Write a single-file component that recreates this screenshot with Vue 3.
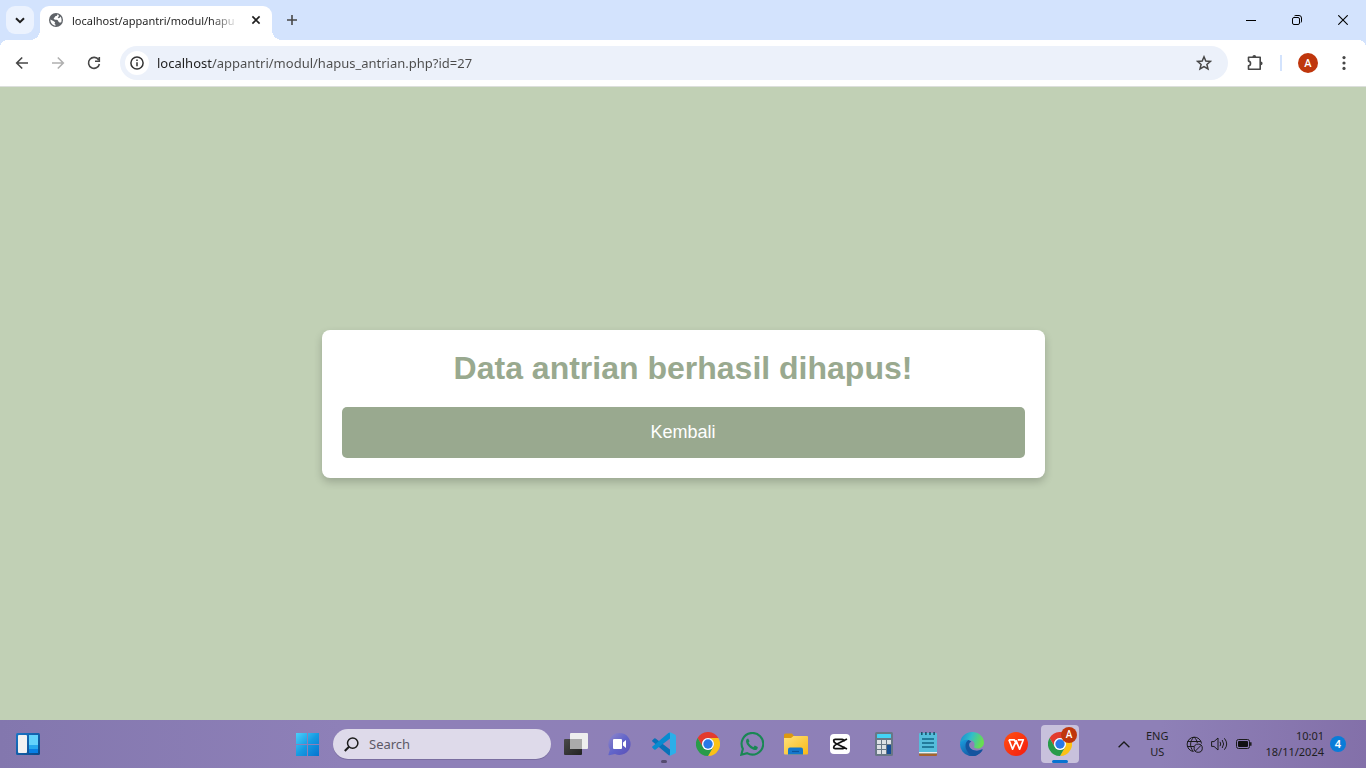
<script setup>
import { ref } from 'vue'

const address = ref('localhost/appantri/modul/hapus_antrian.php?id=27')
const query = ref('')
</script>

<template>
  <div class="screen">
    <header class="tabs">
      <button class="tab-search" aria-label="Search tabs">
        <svg width="10" height="7" viewBox="0 0 10 7"><path d="M1 1.2 5 5.2 9 1.2" fill="none" stroke="#1f1f1f" stroke-width="2" /></svg>
      </button>
      <div class="tab">
        <svg class="favicon" width="14" height="14" viewBox="0 0 14 14">
          <circle cx="7" cy="7" r="7" fill="#5f6368" />
          <path d="M8.2 1.3C8.8 2.6 7.6 3.3 6.2 3.3 6.2 4.7 4.8 4.6 4.7 5.6 4.7 6.5 6.4 6.9 7.6 6.8 9.2 6.8 9 8.4 10 9.2 11 9.8 11.8 9.2 12.3 9.2 12.9 7.5 12.7 5.2 11.4 3.6 11 4.8 10 5.5 8.7 5.1 9.7 4.2 9.8 2.8 9.8 2ZM1.4 6.6C1.3 9.8 3.6 12.4 6.5 12.7L6.5 11.4C5.6 11.2 5.2 10.4 6.2 9.7 5.8 8.4 3.2 7.8 1.4 6.6Z" fill="#fff" />
        </svg>
        <span class="tab-title">localhost/appantri/modul/hapu</span>
        <button class="tab-close" aria-label="Close tab">
          <svg width="10" height="10" viewBox="0 0 10 10"><path d="M1.4 1.4 8.6 8.6M8.6 1.4 1.4 8.6" stroke="#1f1f1f" stroke-width="1.6" /></svg>
        </button>
      </div>
      <button class="tab-new" aria-label="New tab">
        <svg width="12" height="12" viewBox="0 0 12 12"><path d="M6 1V11M1 6H11" stroke="#474747" stroke-width="1.6" /></svg>
      </button>
      <div class="window-buttons">
        <button aria-label="Minimize">
          <svg width="10" height="10" viewBox="0 0 10 10"><path d="M0 5.5H10" stroke="#000" /></svg>
        </button>
        <button aria-label="Restore">
          <svg width="10" height="10" viewBox="0 0 10 10" fill="none" stroke="#000"><rect x=".5" y="2.5" width="7" height="7" rx="1.5" /><path d="M2.5 .8Q3 .5 4 .5H7Q9.5 .5 9.5 3V6Q9.5 7 9.1 7.5" /></svg>
        </button>
        <button aria-label="Close">
          <svg width="10" height="10" viewBox="0 0 10 10"><path d="M.3 .3 9.7 9.7M9.7 .3 .3 9.7" stroke="#000" stroke-width="1.1" /></svg>
        </button>
      </div>
    </header>

    <nav class="toolbar">
      <button class="tool" aria-label="Back">
        <svg width="16" height="16" viewBox="0 0 16 16" fill="none" stroke="#474747" stroke-width="1.6"><path d="M14 8H3M8.2 2.5 2.7 8 8.2 13.5" /></svg>
      </button>
      <button class="tool" aria-label="Forward" disabled>
        <svg width="16" height="16" viewBox="0 0 16 16" fill="none" stroke="#b0b0b0" stroke-width="1.6"><path d="M2 8H13M7.8 2.5 13.3 8 7.8 13.5" /></svg>
      </button>
      <button class="tool" aria-label="Reload">
        <svg width="16" height="16" viewBox="0 0 16 16" fill="none" stroke="#474747" stroke-width="1.6"><path d="M12.6 4.8A5.5 5.5 0 1 0 13.4 9M13.3 2V6.3H9" /></svg>
      </button>
      <div class="omnibox">
        <button class="site-info" aria-label="View site information">
          <svg width="14" height="14" viewBox="0 0 14 14"><circle cx="7" cy="7" r="6.1" fill="none" stroke="#333" stroke-width="1.5" /><path d="M7 6.2V10.3M7 3.6V5.1" stroke="#333" stroke-width="1.5" /></svg>
        </button>
        <input v-model="address" class="address" type="text" aria-label="Address" spellcheck="false" />
        <button class="star" aria-label="Bookmark this tab">
          <svg width="16" height="16" viewBox="0 0 16 16"><path d="M8 1.8 9.8 6 14.4 6.4 10.9 9.4 12 13.9 8 11.5 4 13.9 5.1 9.4 1.6 6.4 6.2 6Z" fill="none" stroke="#474747" stroke-width="1.5" /></svg>
        </button>
      </div>
      <button class="extensions" aria-label="Extensions">
        <svg width="18" height="18" viewBox="0 0 18 18"><path d="M2.5 3.3H14.2V15.2H2.5V11.7C5.2 11.5 5.2 7.3 2.5 7.1Z" fill="none" stroke="#474747" stroke-width="1.6" stroke-linejoin="round" /><path d="M6.4 3A1.9 1.9 0 0 1 10.2 3ZM14.7 7.4A1.9 1.9 0 0 1 14.7 11.2Z" fill="#474747" /></svg>
      </button>
      <span class="separator"></span>
      <button class="avatar" aria-label="Profile">A</button>
      <button class="menu" aria-label="Menu">
        <svg width="4" height="16" viewBox="0 0 4 16" fill="#474747"><circle cx="2" cy="2.6" r="1.6" /><circle cx="2" cy="8" r="1.6" /><circle cx="2" cy="13.4" r="1.6" /></svg>
      </button>
    </nav>

    <main class="page">
      <section class="card">
        <h1>Data antrian berhasil dihapus!</h1>
        <button class="back">Kembali</button>
      </section>
    </main>

    <footer class="taskbar">
      <div class="side">
        <button class="widgets" aria-label="Widgets">
          <svg width="24" height="22" viewBox="0 0 24 22">
            <defs><linearGradient id="wg" x2="1" y2="1"><stop stop-color="#1976c8" /><stop offset="1" stop-color="#0c4888" /></linearGradient></defs>
            <rect width="24" height="22" rx="1.5" fill="url(#wg)" /><rect x="2" y="2" width="9" height="18" rx="1" fill="#f2f2f2" /><path d="M13 2H22V12H13Z" fill="#62d3fc" /><path d="M13 12H22V16H13Z" fill="#25a8ee" /><path d="M13 16H22V20H13Z" fill="#087fe5" />
          </svg>
        </button>
      </div>

      <div class="apps">
        <button class="start" aria-label="Start">
          <svg width="23" height="23" viewBox="0 0 23 23">
            <defs><linearGradient id="st" gradientUnits="userSpaceOnUse" x1="0" y1="0" x2="23" y2="23"><stop stop-color="#4cd0fb" /><stop offset=".5" stop-color="#169be2" /><stop offset="1" stop-color="#0473cf" /></linearGradient></defs>
            <path d="M0 0H11V11H0ZM12 0H23V11H12ZM0 12H11V23H0ZM12 12H23V23H12Z" fill="url(#st)" />
          </svg>
        </button>
        <label class="search">
          <svg width="15" height="15" viewBox="0 0 15 15" fill="none" stroke="#1b1b1b" stroke-width="1.5"><circle cx="8.7" cy="6.1" r="5.2" /><path d="M5 9.8 .8 14" stroke-width="2" /></svg>
          <input v-model="query" type="text" placeholder="Search" aria-label="Search" />
        </label>

        <button class="app" aria-label="Task view">
          <svg width="24" height="24" viewBox="0 0 24 24">
            <defs><linearGradient id="tv" y2="1"><stop stop-color="#4a4a4a" /><stop offset="1" stop-color="#222" /></linearGradient></defs>
            <rect y="7" width="18" height="16" rx="1" fill="url(#tv)" /><rect x="6" y="1" width="18" height="16" rx="1" fill="#eee" /><path d="M6 7H18V17H7Q6 17 6 16Z" fill="#aaa" />
          </svg>
        </button>
        <button class="app" aria-label="Chat">
          <svg width="24" height="24" viewBox="0 0 24 24">
            <defs><linearGradient id="ch" x2="1" y2="1"><stop stop-color="#9288c8" /><stop offset=".5" stop-color="#6265ca" /><stop offset="1" stop-color="#5a4fb6" /></linearGradient></defs>
            <path d="M11.7 1A11 11 0 1 1 7 22L1 23.2Q.2 23.2 .4 22.5L1.9 17.5A11 11 0 0 1 11.7 1Z" fill="url(#ch)" /><rect x="5" y="7" width="9" height="10" rx="1" fill="#fff" /><path d="M15 10.5 18 8V16L15 13.5Z" fill="#fff" />
          </svg>
        </button>
        <button class="app running" aria-label="Visual Studio Code">
          <svg width="24" height="24" viewBox="0 0 24 24">
            <path d="M.4 8.3 2.2 6.6Q2.9 6.1 3.6 6.6L18 17.4V23.6Q17.2 23.6 16.4 22.9L.4 9.5Q-.2 8.9 .4 8.3Z" fill="#0871b8" />
            <path d="M.4 15.7 2.2 17.4Q2.9 17.9 3.6 17.4L18 6.6V.4Q17.2 .4 16.4 1.1L.4 14.5Q-.2 15.1 .4 15.7Z" fill="#078bd0" />
            <path d="M17 .6Q17.8-.1 18.7 .4L23 2.5Q24 3 24 4V20Q24 21 23 21.5L18.7 23.6Q17.8 24.1 17 23.4 18 23.2 18 22V2Q18 .8 17 .6Z" fill="#2bafe9" />
          </svg>
        </button>
        <button class="app" aria-label="Google Chrome">
          <svg width="24" height="24" viewBox="0 0 24 24">
            <path d="M1.6 6A12 12 0 0 1 22.4 6H12A6 6 0 0 0 6.8 15Z" fill="#e33b2e" /><path d="M22.4 6A12 12 0 0 1 12 24L17.2 15A6 6 0 0 0 12 6Z" fill="#fbc116" /><path d="M12 24A12 12 0 0 1 1.6 6L6.8 15A6 6 0 0 0 17.2 15Z" fill="#289b49" /><circle cx="12" cy="12" r="6" fill="#fff" /><circle cx="12" cy="12" r="4.7" fill="#2878e8" />
          </svg>
        </button>
        <button class="app" aria-label="WhatsApp">
          <svg width="24" height="24" viewBox="0 0 24 24">
            <path d="M1.3 22.7 2.9 16.9A10.8 10.8 0 1 1 7.1 21.2Z" fill="none" stroke="#198754" stroke-width="2.1" /><path d="M8.2 6.5 9.4 9.1Q9.6 9.7 8.5 10.8 10.2 14 13.4 15.2L14.8 13.6 17.8 15Q17.8 18.1 14.9 18.1C11.5 17.8 6 13.3 6 9.1Q6.2 6.3 8.2 6.5Z" fill="#198754" />
          </svg>
        </button>
        <button class="app" aria-label="File Explorer">
          <svg width="24" height="24" viewBox="0 0 24 24">
            <defs><linearGradient id="fe" x2="1" y2="1"><stop stop-color="#ffe17a" /><stop offset="1" stop-color="#f8b916" /></linearGradient></defs>
            <path d="M0 3Q0 1.5 1.5 1.5H8L10 4V8H0Z" fill="#dc9810" /><path d="M0 6H7L9.5 4H23Q24 4 24 5V21.5Q24 22.5 23 22.5H1Q0 22.5 0 21.5Z" fill="url(#fe)" /><path d="M4 22.5V17.5Q4 15.5 6 15.5H17Q19 15.5 19 17.5V22.5Z" fill="#1478cc" /><path d="M8 19.5H15" stroke="#0b559c" stroke-width="1.2" />
          </svg>
        </button>
        <button class="app" aria-label="CapCut">
          <svg width="20" height="20" viewBox="0 0 20 20">
            <rect width="20" height="20" rx="4" fill="#fff" /><path d="M17 5 6 10.5Q3.7 11.7 3.7 13.3 3.7 14.7 5.2 14.7H12.2Q13.7 14.7 13.7 13V12.2M17 15 6 9.5Q3.7 8.3 3.7 6.7 3.7 5.3 5.2 5.3H12.2Q13.7 5.3 13.7 7V7.8" fill="none" stroke="#111" stroke-width="1.8" />
          </svg>
        </button>
        <button class="app" aria-label="Calculator">
          <svg width="18" height="24" viewBox="0 0 18 24">
            <rect width="18" height="24" rx="1.5" fill="#687786" /><rect x="2" y="2" width="14" height="4" rx=".5" fill="#44d3f5" /><path d="M2 8H6V12H2ZM7 8H11V12H7ZM12 8H16V12H12ZM2 13H6V17H2ZM7 13H11V17H7ZM2 18H6V22H2ZM7 18H11V22H7Z" fill="#dce0e4" /><path d="M12 13H16V22H12Z" fill="#154e94" />
          </svg>
        </button>
        <button class="app" aria-label="Notepad">
          <svg width="18" height="24" viewBox="0 0 18 24">
            <rect y="1" width="18" height="21" rx="1" fill="#55bddb" /><path d="M0 20H18V21.5H0Z" fill="#eee" /><path d="M0 21.5H18V23Q18 24 17 24H1Q0 24 0 23Z" fill="#a5642d" /><path d="M2.8 0V3M6.9 0V3M11 0V3M15.1 0V3" stroke="#17576f" stroke-width="1.6" /><path d="M3 7H15M3 11H15M3 15H15" stroke="#126687" stroke-width="1.4" />
          </svg>
        </button>
        <button class="app" aria-label="Microsoft Edge">
          <svg width="24" height="24" viewBox="0 0 24 24">
            <defs><linearGradient id="ed" x2="1" y2=".3"><stop stop-color="#1686cf" /><stop offset=".5" stop-color="#31bdcb" /><stop offset="1" stop-color="#68dc52" /></linearGradient><linearGradient id="eb" x2="1" y2="1"><stop stop-color="#1a9ee0" /><stop offset="1" stop-color="#123e8a" /></linearGradient></defs>
            <path d="M0 12A12 12 0 0 1 12 0C19 0 24 5 24 10.5 24 14.5 20.5 16.5 17.5 16.5 14.7 16.5 13.5 15.3 14.1 14.3 15.8 11.5 13.2 8 8.7 8 4.3 8 1 10.5 0 12Z" fill="url(#ed)" />
            <path d="M0 12C1 8.5 5 7.2 8.6 8 10 8.5 11.5 9.5 11.3 9.8 8 11 8.5 16 13 18 16 19.2 19 18.7 21.5 17.5 22.5 17 22.9 17.5 22.5 18A12 12 0 0 1 0 12Z" fill="url(#eb)" /><path d="M8.6 8C5.5 9.5 4.7 14 6.5 18 8 21.3 11 23.5 13.5 23.9 18 23.5 21 20.5 22.5 18 17.5 20.2 8 18.7 9 12 9.3 10.5 10.3 9.8 11.3 9.8Z" fill="#14549f" />
          </svg>
        </button>
        <button class="app" aria-label="WPS Office">
          <svg width="24" height="24" viewBox="0 0 24 24">
            <defs><linearGradient id="wp" y2="1"><stop stop-color="#ff5012" /><stop offset="1" stop-color="#f51b0e" /></linearGradient></defs>
            <circle cx="12" cy="12" r="12" fill="url(#wp)" /><path d="M4.9 7.8H10.4L12.2 12.2M4.9 7.8 8.6 17.2 12.2 8.8 15.6 17.2 19.3 7.8H13.8" fill="none" stroke="#fff" stroke-width="1.7" stroke-linejoin="round" />
          </svg>
        </button>
        <button class="app active" aria-label="Google Chrome, profile A">
          <span class="tile">
            <svg width="24" height="24" viewBox="0 0 24 24">
              <path d="M1.6 6A12 12 0 0 1 22.4 6H12A6 6 0 0 0 6.8 15Z" fill="#e33b2e" /><path d="M22.4 6A12 12 0 0 1 12 24L17.2 15A6 6 0 0 0 12 6Z" fill="#fbc116" /><path d="M12 24A12 12 0 0 1 1.6 6L6.8 15A6 6 0 0 0 17.2 15Z" fill="#289b49" /><circle cx="12" cy="12" r="6" fill="#fff" /><circle cx="12" cy="12" r="4.7" fill="#2878e8" />
            </svg>
            <span class="profile">A</span>
          </span>
        </button>
      </div>

      <div class="side tray">
        <button aria-label="Show hidden icons">
          <svg width="12" height="7" viewBox="0 0 12 7"><path d="M.6 6.3 6 1 11.4 6.3" fill="none" stroke="#1b1b1b" stroke-width="1.3" /></svg>
        </button>
        <button class="language">ENG<br />US</button>
        <button class="status" aria-label="Network, volume and battery">
          <svg width="17" height="17" viewBox="0 0 17 17" fill="none" stroke="#1b1b1b"><path d="M7.5 15.5A7.2 7.2 0 1 1 15.5 7.5M7.2 15.2C3.6 11 3.6 5 8 1 10.1 3 11.1 5 11.3 7M1.4 5.5H14.8M1.2 10.5H8" /><circle cx="12.2" cy="12.2" r="4.1" /><path d="M9.3 15.1 15.1 9.3" /></svg>
          <svg width="17" height="14" viewBox="0 0 17 14" fill="none" stroke="#1b1b1b"><path d="M.6 4.6H3L7 1V13L3 9.4H.6Z" stroke-linejoin="round" /><path d="M9 4.8Q10.5 7 9 9.2M11.2 3Q14 7 11.2 11M13.4 1.3Q18 7 13.4 12.7" /></svg>
          <svg width="16" height="10" viewBox="0 0 16 10"><rect x=".5" y=".5" width="13" height="9" rx="2" fill="none" stroke="#1b1b1b" /><rect x="2" y="2" width="10" height="6" rx="1" fill="#111" /><path d="M14.8 3.3V6.7" stroke="#1b1b1b" stroke-width="1.5" /></svg>
        </button>
        <button class="clock">10:01<br />18/11/2024</button>
        <button class="notices" aria-label="4 notifications">4</button>
      </div>
    </footer>
  </div>
</template>

<style>
body {
  margin: 0;
}
</style>

<style scoped>
.screen {
  display: flex;
  flex-direction: column;
  height: 100vh;
  min-height: 400px;
  font-family: "Noto Sans", "Open Sans", sans-serif;
  color: #1f1f1f;
}
button,
input {
  box-sizing: border-box;
  border: 0;
  padding: 0;
  margin: 0;
  background: none;
  color: inherit;
  font: inherit;
  outline: 0;
}
button {
  display: flex;
  align-items: center;
  justify-content: center;
  flex-shrink: 0;
}
svg {
  display: block;
  flex-shrink: 0;
}

.tabs {
  display: flex;
  height: 40px;
  padding-left: 6px;
  background: #d3e3fd;
}
.tab-search {
  width: 28px;
  height: 28px;
  margin-top: 6px;
  border-radius: 9px;
  background: #ebf2fe;
}
.tab {
  position: relative;
  display: flex;
  align-items: center;
  box-sizing: border-box;
  width: 232px;
  height: 34px;
  margin: 6px 0 0 6px;
  padding: 0 8px 6px 9px;
  border-radius: 9px 9px 0 0;
  background: #fff;
}
.tab::before,
.tab::after {
  content: "";
  position: absolute;
  bottom: 0;
  width: 10px;
  height: 10px;
}
.tab::before {
  right: 100%;
  background: radial-gradient(circle at 0 0, transparent 10px, #fff 10px);
}
.tab::after {
  left: 100%;
  background: radial-gradient(circle at 100% 0, transparent 10px, #fff 10px);
}
.tab-title {
  flex: 1;
  margin-left: 9px;
  white-space: nowrap;
  font-size: 11px;
  mask-image: linear-gradient(to right, #000 calc(100% - 28px), transparent);
}
.tab-close {
  width: 16px;
  height: 16px;
  margin-left: 9px;
}
.tab-new {
  width: 28px;
  height: 28px;
  margin: 6px 0 0 6px;
}
.window-buttons {
  display: flex;
  margin-left: auto;
}
.window-buttons button {
  width: 46px;
}

.toolbar {
  display: flex;
  align-items: center;
  height: 46px;
  padding: 0 20px 0 4px;
  border-bottom: 1px solid #dcdfdc;
  background:
    radial-gradient(circle at 8px 8px, #fff 8px, #d3e3fd 8px) 0 0 / 8px 8px no-repeat,
    radial-gradient(circle at 0 8px, #fff 8px, #d3e3fd 8px) 100% 0 / 8px 8px no-repeat,
    #fff;
}
.tool {
  width: 36px;
  height: 34px;
}
.omnibox {
  display: flex;
  flex: 1;
  align-items: center;
  height: 34px;
  margin-left: 8px;
  padding: 0 16px 0 5px;
  border-radius: 17px;
  background: #ecf1fa;
}
.site-info {
  width: 24px;
  height: 24px;
  border-radius: 50%;
  background: #fff;
}
.address {
  flex: 1;
  min-width: 0;
  height: 24px;
  margin-left: 8px;
  font-size: 13px;
  color: transparent;
  caret-color: #1f1f1f;
  background: linear-gradient(to right, #1f1f1f 55px, #4b4b4b 55px);
  background-clip: text;
}
.extensions {
  margin-left: 18px;
}
.separator {
  width: 2px;
  height: 16px;
  margin: 0 16px;
  background: #d3e3fd;
}
.avatar {
  width: 20px;
  height: 20px;
  border-radius: 50%;
  background: #bf360c;
  color: #fff;
  font-family: Roboto, sans-serif;
  font-size: 11px;
  font-weight: 500;
}
.menu {
  margin-left: 24px;
}

.page {
  display: flex;
  flex: 1;
  align-items: center;
  justify-content: center;
  background: #c1d0b5;
  font-family: "Liberation Sans", Arial, sans-serif;
}
.card {
  width: 50%;
  padding: 20px;
  border-radius: 8px;
  background: #fff;
  box-shadow: 0 4px 8px rgba(0, 0, 0, 0.2);
  text-align: center;
}
h1 {
  margin: 0 0 20px;
  font-size: 32px;
  line-height: 37px;
  color: #99a98f;
}
.back {
  width: 100%;
  padding: 15px;
  border-radius: 5px;
  background: #99a98f;
  color: #fff;
  font-size: 18px;
  line-height: 21px;
}

.taskbar {
  display: grid;
  grid-template-columns: 1fr auto 1fr;
  height: 48px;
  background: linear-gradient(to right, #8377ae, #8e80b8 25%, #8e80b7 85%, #8370a9);
}
.side {
  display: flex;
  align-items: center;
}
.widgets {
  margin-left: 16px;
}
.apps {
  display: flex;
  align-items: center;
}
.start {
  width: 45px;
  height: 48px;
  padding-right: 10px;
  justify-content: flex-end;
}
.search {
  display: flex;
  align-items: center;
  box-sizing: border-box;
  width: 218px;
  height: 30px;
  margin: 0 3px 0 4px;
  padding: 0 11px;
  border-radius: 15px;
  background: #dedaea;
  box-shadow: 0 1px 0 #796da0;
}
.search input {
  flex: 1;
  min-width: 0;
  margin-left: 10px;
  font-size: 13px;
}
.search input::placeholder {
  color: #5c5966;
  opacity: 1;
}
.app {
  position: relative;
  width: 44px;
  height: 48px;
}
.running::after,
.active::after {
  content: "";
  position: absolute;
  bottom: 5px;
  width: 6px;
  height: 3px;
  border-radius: 2px;
  background: #554c70;
}
.active::after {
  width: 16px;
  background: #0874d1;
}
.tile {
  position: relative;
  display: flex;
  align-items: center;
  justify-content: center;
  width: 38px;
  height: 38px;
  border-radius: 4px;
  background: #c8c1dc;
}
.profile {
  position: absolute;
  top: 2px;
  right: 2px;
  width: 16px;
  height: 16px;
  border-radius: 50%;
  background: #bf360c;
  color: #fff;
  font-family: Roboto, sans-serif;
  font-size: 10px;
  font-weight: 500;
  line-height: 16px;
  text-align: center;
}
.tray {
  justify-content: flex-end;
  padding-right: 20px;
  font-size: 11px;
  line-height: 16px;
}
.language {
  margin-left: 16px;
  text-align: center;
}
.status {
  gap: 8px;
  margin-left: 18px;
}
.clock {
  margin-left: 13px;
  text-align: right;
}
.notices {
  width: 16px;
  height: 16px;
  margin-left: 6px;
  border-radius: 50%;
  background: #0a7cd8;
  color: #fff;
  font-weight: 600;
}
</style>
